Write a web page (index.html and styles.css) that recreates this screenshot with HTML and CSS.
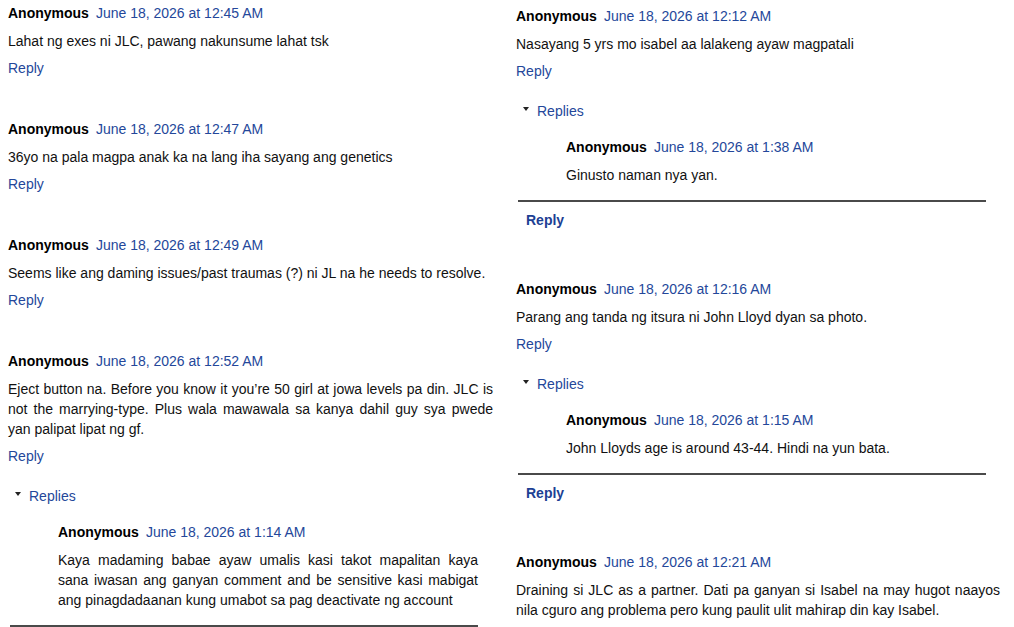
FILE: index.html
```html
<!DOCTYPE html>
<html lang="en">
<head>
  <meta charset="UTF-8" />
  <meta name="viewport" content="width=device-width, initial-scale=1" />
  <title>Comments</title>
  <link rel="stylesheet" href="styles.css">
</head>
<body>
  <div class="comments">

    <!-- left column -->
    <div class="column">
      <div class="comment">
        <div class="comment-header"><cite class="user">Anonymous</cite><a class="datetime" href="#">June 18, 2026 at 12:45 AM</a></div>
        <p class="comment-content">Lahat ng exes ni JLC, pawang nakunsume lahat tsk</p>
        <div class="comment-actions"><a href="#">Reply</a></div>
      </div>

      <div class="comment">
        <div class="comment-header"><cite class="user">Anonymous</cite><a class="datetime" href="#">June 18, 2026 at 12:47 AM</a></div>
        <p class="comment-content">36yo na pala magpa anak ka na lang iha sayang ang genetics</p>
        <div class="comment-actions"><a href="#">Reply</a></div>
      </div>

      <div class="comment">
        <div class="comment-header"><cite class="user">Anonymous</cite><a class="datetime" href="#">June 18, 2026 at 12:49 AM</a></div>
        <p class="comment-content">Seems like ang daming issues/past traumas (?) ni JL na he needs to resolve.</p>
        <div class="comment-actions"><a href="#">Reply</a></div>
      </div>

      <div class="comment">
        <div class="comment-header"><cite class="user">Anonymous</cite><a class="datetime" href="#">June 18, 2026 at 12:52 AM</a></div>
        <p class="comment-content">Eject button na. Before you know it you’re 50 girl at jowa levels pa din. JLC is not the marrying-type. Plus wala mawawala sa kanya dahil guy sya pwede yan palipat lipat ng gf.</p>
        <div class="comment-actions"><a href="#">Reply</a></div>
        <div class="comment-replies">
          <div class="thread-toggle"><span class="arrow"></span><a href="#">Replies</a></div>
          <div class="inline-thread">
            <div class="comment nested">
              <div class="comment-header"><cite class="user">Anonymous</cite><a class="datetime" href="#">June 18, 2026 at 1:14 AM</a></div>
              <p class="comment-content">Kaya madaming babae ayaw umalis kasi takot mapalitan kaya sana iwasan ang ganyan comment and be sensitive kasi mabigat ang pinagdadaanan kung umabot sa pag deactivate ng account</p>
            </div>
          </div>
          <div class="continue"><a href="#">Reply</a></div>
        </div>
      </div>
    </div>

    <!-- right column -->
    <div class="column column-right">
      <div class="comment">
        <div class="comment-header"><cite class="user">Anonymous</cite><a class="datetime" href="#">June 18, 2026 at 12:12 AM</a></div>
        <p class="comment-content">Nasayang 5 yrs mo isabel aa lalakeng ayaw magpatali</p>
        <div class="comment-actions"><a href="#">Reply</a></div>
        <div class="comment-replies">
          <div class="thread-toggle"><span class="arrow"></span><a href="#">Replies</a></div>
          <div class="inline-thread">
            <div class="comment nested">
              <div class="comment-header"><cite class="user">Anonymous</cite><a class="datetime" href="#">June 18, 2026 at 1:38 AM</a></div>
              <p class="comment-content">Ginusto naman nya yan.</p>
            </div>
          </div>
          <div class="continue"><a href="#">Reply</a></div>
        </div>
      </div>

      <div class="comment">
        <div class="comment-header"><cite class="user">Anonymous</cite><a class="datetime" href="#">June 18, 2026 at 12:16 AM</a></div>
        <p class="comment-content">Parang ang tanda ng itsura ni John Lloyd dyan sa photo.</p>
        <div class="comment-actions"><a href="#">Reply</a></div>
        <div class="comment-replies">
          <div class="thread-toggle"><span class="arrow"></span><a href="#">Replies</a></div>
          <div class="inline-thread">
            <div class="comment nested">
              <div class="comment-header"><cite class="user">Anonymous</cite><a class="datetime" href="#">June 18, 2026 at 1:15 AM</a></div>
              <p class="comment-content">John Lloyds age is around 43-44. Hindi na yun bata.</p>
            </div>
          </div>
          <div class="continue"><a href="#">Reply</a></div>
        </div>
      </div>

      <div class="comment">
        <div class="comment-header"><cite class="user">Anonymous</cite><a class="datetime" href="#">June 18, 2026 at 12:21 AM</a></div>
        <p class="comment-content">Draining si JLC as a partner. Dati pa ganyan si Isabel na may hugot naayos nila cguro ang problema pero kung paulit ulit mahirap din kay Isabel.</p>
        <div class="comment-actions"><a href="#">Reply</a></div>
      </div>
    </div>

  </div>
</body>
</html>
```

FILE: styles.css
```css
body { margin: 0; font-family: "Liberation Sans", Arial, sans-serif; font-size: 14px; line-height: 20px; color: #111; background: #fff; overflow: hidden; }
a { color: #24479a; text-decoration: none; }

.comments { display: grid; grid-template-columns: 485px 484px; column-gap: 23px; align-items: start; padding: 3px 0 0 8px; }
.column-right { padding-top: 3px; }
.column-right .comment-replies { margin-right: 14px; }

.comment { margin-bottom: 41px; }
.comment-header { margin-bottom: 8px; }
.user { font-style: normal; font-weight: bold; color: #000; }
.datetime { margin-left: 7px; }
.comment-content { margin: 0 0 7px; text-align: justify; }

.comment-replies { margin-top: 20px; margin-right: 15px; }
.thread-toggle { margin-bottom: 16px; }
.arrow { display: inline-block; width: 0; height: 0; margin: 0 8px 0 7px; border-left: 3.5px solid transparent; border-right: 3.5px solid transparent; border-top: 4px solid #222; vertical-align: 5px; }

.inline-thread { padding-left: 50px; }
.comment.nested { margin-bottom: 0; }
.comment.nested .comment-content { margin-bottom: 0; }

.continue { margin: 15px 0 0 2px; border-top: 2px solid #4a4a4a; }
.continue a { display: block; padding: 8px; font-weight: bold; color: #1d3f94; }
```
